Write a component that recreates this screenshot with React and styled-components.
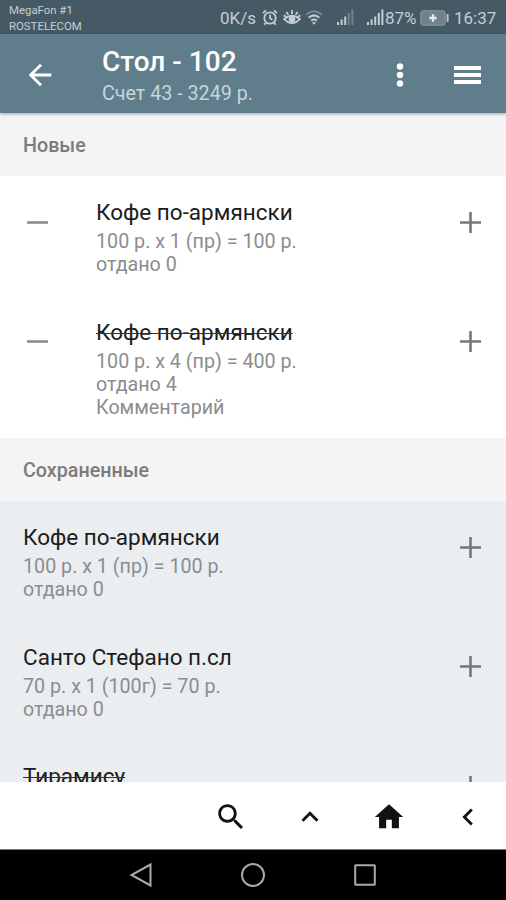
import React from "react";
import styled, { createGlobalStyle } from "styled-components";

const newItems = [
  {
    name: "Кофе по-армянски",
    lines: ["100 р. x 1 (пр) = 100 р.", "отдано 0"],
  },
  {
    name: "Кофе по-армянски",
    lines: ["100 р. x 4 (пр) = 400 р.", "отдано 4", "Комментарий"],
    done: true,
  },
];

const savedItems = [
  {
    name: "Кофе по-армянски",
    lines: ["100 р. x 1 (пр) = 100 р.", "отдано 0"],
  },
  {
    name: "Санто Стефано п.сл",
    lines: ["70 р. x 1 (100г) = 70 р.", "отдано 0"],
  },
  { name: "Тирамису", lines: [], done: true },
];

const Signal = ({ faded }) => (
  <svg width="17" height="17" viewBox="0 0 17 17" fill="#c3ced4">
    <rect x="0" y="13" width="2" height="3" />
    <rect x="3.6" y="10.5" width="2" height="5.5" />
    <rect x="7.2" y="7.5" width="2" height="8.5" />
    <rect x="10.8" y="4" width="2" height="12" opacity={faded ? 0.35 : 1} />
    <rect x="14.4" y="0.5" width="2" height="15.5" opacity={faded ? 0.35 : 1} />
  </svg>
);

const StatusIcons = () => (
  <>
    <AlarmIcon width="16" height="17" viewBox="0 0 16 17">
      <circle cx="8" cy="9" r="5.7" />
      <path d="M8 5.8v3.4l2.4 1.5M1 4.2 4 1.4M15 4.2l-3-2.8M3.8 13.7l-1.5 2M12.2 13.7l1.5 2" />
    </AlarmIcon>
    <EyeIcon width="18" height="17" viewBox="0 0 18 17">
      <path d="M1.2 10.2Q9 3.2 16.8 10.2 9 18.2 1.2 10.2ZM9 1v4M3.6 2.8l1.6 3M14.4 2.8l-1.6 3M.8 6.2l2 1.6M17.2 6.2l-2 1.6" />
      <circle cx="9" cy="10.2" r="2.4" />
    </EyeIcon>
    <WifiIcon width="18" height="17" viewBox="0 0 18 17">
      <path d="M1.2 5.7Q9-1.2 16.8 5.7" opacity=".4" />
      <path d="M3.7 8.7Q9 4.1 14.3 8.7M6.2 11.6Q9 9.4 11.8 11.6" />
      <path d="m9 15.8-2.2-2.5h4.4z" fill="#c3ced4" stroke="none" />
    </WifiIcon>
  </>
);

const Item = ({ item, removable }) => (
  <Row>
    {removable && (
      <Minus width="21" height="21" viewBox="0 0 21 21">
        <path d="M0 10.5h21" />
      </Minus>
    )}
    <Info>
      <Name $done={item.done}>{item.name}</Name>
      {item.lines.map(line => (
        <Line key={line}>{line}</Line>
      ))}
    </Info>
    <Plus width="21" height="21" viewBox="0 0 21 21">
      <path d="M0 10.5h21M10.5 0v21" />
    </Plus>
  </Row>
);

export default function App() {
  return (
    <>
      <GlobalStyle />
      <Screen>
        <StatusBar>
          <Carriers>
            <span>MegaFon #1</span>
            <span>ROSTELECOM</span>
          </Carriers>
          <Status>
            <Speed>0K/s</Speed>
            <StatusIcons />
            <SignalSlot $left={14} $right={13}>
              <Signal faded />
            </SignalSlot>
            <SignalSlot $left={0} $right={1}>
              <Signal />
            </SignalSlot>
            <Percent>87%</Percent>
            <Battery width="29" height="16" viewBox="0 0 29 16">
              <rect x=".8" y=".8" width="24.4" height="14.4" rx="2.5" fill="#71828b" stroke="#8c9ca4" />
              <path d="M27.6 4v8" stroke="#b5c1c8" strokeWidth="2" />
              <path d="M13 4.3v7.4M9.3 8h7.4" stroke="#e4ebee" strokeWidth="2.4" />
            </Battery>
            <Clock>16:37</Clock>
          </Status>
        </StatusBar>
        <AppBar>
          <BackIcon width="34" height="34" viewBox="0 0 24 24">
            <path d="M20 11H7.83l5.59-5.59L12 4l-8 8 8 8 1.41-1.41L7.83 13H20v-2z" />
          </BackIcon>
          <Heading>
            <h1>Стол - 102</h1>
            <h2>Счет 43 - 3249 р.</h2>
          </Heading>
          <svg width="8" height="26" viewBox="0 0 8 26" fill="#fff">
            <circle cx="4" cy="4.5" r="3.2" />
            <circle cx="4" cy="13" r="3.2" />
            <circle cx="4" cy="21.5" r="3.2" />
          </svg>
          <MenuIcon width="27" height="20" viewBox="0 0 27 20">
            <path d="M0 3h27M0 10h27M0 17h27" />
          </MenuIcon>
        </AppBar>
        <List>
          <SectionTitle>Новые</SectionTitle>
          <Section $bg="#ffffff">
            {newItems.map((item, i) => (
              <Item key={i} item={item} removable />
            ))}
          </Section>
          <SectionTitle>Сохраненные</SectionTitle>
          <Section $bg="#eaeef1">
            {savedItems.map((item, i) => (
              <Item key={i} item={item} />
            ))}
          </Section>
        </List>
        <Toolbar>
          <svg width="34" height="34" viewBox="0 0 24 24">
            <path d="M15.5 14h-.79l-.28-.27C15.41 12.59 16 11.11 16 9.5 16 5.91 13.09 3 9.5 3S3 5.91 3 9.5 5.91 16 9.5 16c1.61 0 3.09-.59 4.23-1.57l.27.28v.79l5 4.99L20.49 19l-4.99-5zm-6 0C7.01 14 5 11.99 5 9.5S7.01 5 9.5 5 14 7.01 14 9.5 11.99 14 9.5 14z" />
          </svg>
          <svg width="34" height="34" viewBox="0 0 24 24">
            <path d="M12 8l-6 6 1.41 1.41L12 10.83l4.59 4.58L18 14z" />
          </svg>
          <svg width="34" height="34" viewBox="0 0 24 24">
            <path d="M10 20v-6h4v6h5v-8h3L12 3 2 12h3v8z" />
          </svg>
          <svg width="34" height="34" viewBox="0 0 24 24">
            <path d="M15.41 7.41L14 6l-6 6 6 6 1.41-1.41L10.83 12z" />
          </svg>
        </Toolbar>
        <NavBar>
          <svg width="24" height="26" viewBox="0 0 24 26">
            <path d="M21.5 2.5v21L2.5 13z" />
          </svg>
          <svg width="26" height="26" viewBox="0 0 26 26">
            <circle cx="13" cy="13" r="11" />
          </svg>
          <svg width="24" height="26" viewBox="0 0 24 26">
            <rect x="2.2" y="3.2" width="19.6" height="19.6" rx=".5" />
          </svg>
        </NavBar>
      </Screen>
    </>
  );
}

const GlobalStyle = createGlobalStyle`
  body {
    margin: 0;
    font-family: Roboto, "Noto Sans", sans-serif;
  }
  svg {
    display: block;
    flex: none;
  }
`;

const Screen = styled.div`
  display: flex;
  flex-direction: column;
  width: 506px;
  height: 900px;
  overflow: hidden;
  background: #fff;
`;

const StatusBar = styled.header`
  display: flex;
  justify-content: space-between;
  flex: none;
  height: 34px;
  box-sizing: border-box;
  padding: 0 10px 0 9px;
  background: #465a65;
  color: #c3ced4;
`;

const Carriers = styled.div`
  display: flex;
  flex-direction: column;
  padding-top: 3px;
  font-size: 11.4px;
  line-height: 15.5px;
`;

const Status = styled.div`
  display: flex;
  align-items: center;
  height: 35px;
  font-size: 17px;
  white-space: nowrap;
`;

const Speed = styled.span`
  width: 36px;
  margin-right: 6px;
`;

const AlarmIcon = styled.svg`
  fill: none;
  stroke: #c3ced4;
  stroke-width: 1.8;
`;

const EyeIcon = styled(AlarmIcon)`
  margin-left: 5px;

  circle {
    fill: #c3ced4;
  }
`;

const WifiIcon = styled(AlarmIcon)`
  margin-left: 4px;
  stroke-width: 2;
`;

const SignalSlot = styled.div`
  margin-left: ${props => props.$left}px;
  margin-right: ${props => props.$right}px;
`;

const Percent = styled.span`
  width: 32px;
`;

const Battery = styled.svg`
  margin-left: 3px;
`;

const Clock = styled.span`
  width: 42px;
  margin-left: 5px;
`;

const AppBar = styled.div`
  position: relative;
  display: flex;
  align-items: center;
  flex: none;
  height: 79px;
  box-sizing: border-box;
  padding: 2px 25px 0 23px;
  background: #607d8b;
  box-shadow: 0 1px 3px rgba(0, 0, 0, 0.35);
`;

const BackIcon = styled.svg`
  fill: #fff;
`;

const Heading = styled.div`
  flex: 1;
  padding: 4px 0 0 45px;

  h1,
  h2 {
    margin: 0;
    white-space: nowrap;
  }
  h1 {
    color: #fff;
    font-size: 28px;
    font-weight: 500;
    line-height: 34px;
  }
  h2 {
    color: #c5d5dd;
    font-size: 19.7px;
    font-weight: 400;
    line-height: 29px;
  }
`;

const MenuIcon = styled.svg`
  margin-left: 50px;
  stroke: #fff;
  stroke-width: 4;
`;

const List = styled.main`
  flex: 1;
  min-height: 0;
  overflow: hidden;
`;

const SectionTitle = styled.div`
  height: 63px;
  padding-left: 23px;
  background: #f4f4f4;
  color: #7b7b7b;
  font-size: 19.7px;
  font-weight: 500;
  line-height: 66px;
`;

const Section = styled.section`
  background: ${props => props.$bg};
`;

const Row = styled.div`
  display: flex;
  align-items: flex-start;
  box-sizing: border-box;
  padding: 23px 25.5px 19.5px 23px;
`;

const Info = styled.div`
  flex: 1;
`;

const Name = styled.div`
  height: 31px;
  color: #1c1c1c;
  font-size: 22.5px;
  line-height: 26px;
  text-decoration: ${props => (props.$done ? "line-through 1px #333" : "none")};
`;

const Line = styled.div`
  color: #8b8d8f;
  font-size: 19.7px;
  line-height: 23px;
`;

const Minus = styled.svg`
  margin: 12.5px 48.5px 0 3.5px;
  stroke: #8b8b8b;
  stroke-width: 2.6;
`;

const Plus = styled.svg`
  margin-top: 12.5px;
  stroke: #777;
  stroke-width: 2.6;
`;

const Toolbar = styled.nav`
  display: flex;
  align-items: center;
  justify-content: flex-end;
  gap: 45px;
  flex: none;
  height: 67px;
  box-sizing: border-box;
  padding: 3px 21.5px 0 0;
  background: #fff;
  fill: #111;
`;

const NavBar = styled.footer`
  display: flex;
  align-items: center;
  justify-content: center;
  gap: 87px;
  flex: none;
  height: 51px;
  box-sizing: border-box;
  border-top: 1px solid #777;
  background: #000;
  fill: none;
  stroke: #aaa;
  stroke-width: 2;
`;
